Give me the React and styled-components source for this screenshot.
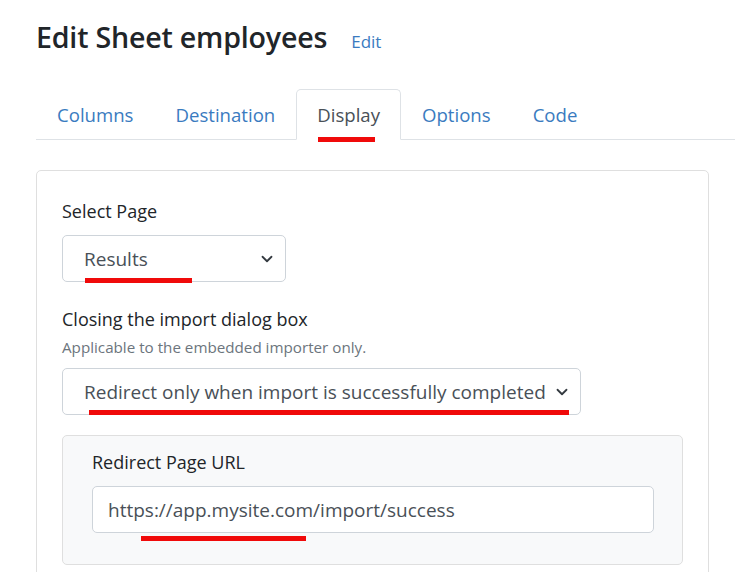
import React from 'react'
import styled, { createGlobalStyle } from 'styled-components'

const GlobalStyle = createGlobalStyle`
    html, body {
        margin: 0;
        padding: 0;
        background: #ffffff;
        overflow: hidden;
    }
    body {
        font-family: "Open Sans", "Noto Sans", sans-serif;
        color: #212529;
    }
`

const Page = styled.div`
    width: 735px;
    height: 572px;
    padding: 19px 0 0 36px;
    box-sizing: border-box;
    overflow: hidden;
`

const TitleRow = styled.div`
    display: flex;
    align-items: baseline;
    gap: 24px;
`

const Title = styled.h3`
    margin: 0;
    font-size: 28.6px;
    font-weight: 600;
    line-height: 1.25;
    color: #212529;
    letter-spacing: -0.2px;
`

const EditLink = styled.a`
    font-size: 17px;
    color: #3a7bbf;
    text-decoration: none;
`

const Tabs = styled.ul`
    display: flex;
    list-style: none;
    margin: 34px 0 0;
    padding: 0;
    border-bottom: 1px solid #dee2e6;
`

const Tab = styled.li`
    position: relative;
    margin-bottom: -1px;
    padding: 10px 20px;
    font-size: 18.6px;
    line-height: 29px;
    color: ${p => (p.$active ? '#495057' : '#3a7bbf')};
    border: 1px solid ${p => (p.$active ? '#dee2e6' : 'transparent')};
    border-bottom-color: ${p => (p.$active ? '#ffffff' : 'transparent')};
    border-radius: 5px 5px 0 0;
    background: ${p => (p.$active ? '#ffffff' : 'transparent')};
`

const Mark = styled.span`
    position: absolute;
    left: ${p => p.$left}px;
    top: ${p => p.$top}px;
    width: ${p => p.$width}px;
    height: 5px;
    background: #f00a0a;
    pointer-events: none;
`

const Card = styled.div`
    margin: 30px 26px 0 0;
    padding: 26px 25px 40px;
    border: 1px solid #dfdfdf;
    border-radius: 5px;
`

const Group = styled.div`
    margin-bottom: ${p => p.$gap || 0}px;
`

const Label = styled.div`
    font-size: 18px;
    line-height: 28px;
    color: #212529;
`

const Help = styled.div`
    margin-top: 3px;
    font-size: 15.2px;
    line-height: 22px;
    color: #6c757d;
`

const SelectBox = styled.div`
    position: relative;
    display: flex;
    align-items: center;
    justify-content: space-between;
    box-sizing: border-box;
    width: ${p => p.$width}px;
    height: 47px;
    margin-top: ${p => p.$top || 0}px;
    padding: 2px 12px 0 21px;
    border: 1px solid #ced4da;
    border-radius: 5px;
    font-size: 19px;
    color: #495057;
    background: #ffffff;
`

const Chevron = () => (
    <svg width="12" height="12" viewBox="0 0 16 16" fill="none">
        <path d="M2 5l6 6 6-6" stroke="#343a40" strokeWidth="2.4" strokeLinecap="round" strokeLinejoin="round" />
    </svg>
)

const Well = styled.div`
    margin-top: 20px;
    padding: 12px 28px 31px 29px;
    background: #f8f9fa;
    border: 1px solid #dfdfdf;
    border-radius: 5px;
`

const Input = styled.div`
    position: relative;
    display: flex;
    align-items: center;
    box-sizing: border-box;
    height: 47px;
    margin-top: 10px;
    padding: 1px 15px 0;
    background: #ffffff;
    border: 1px solid #ced4da;
    border-radius: 5px;
    font-size: 19px;
    color: #495057;
`

const App = () => {
    return (
        <React.Fragment>
            <GlobalStyle />
            <Page>
                <TitleRow>
                    <Title>Edit Sheet employees</Title>
                    <EditLink href="#">Edit</EditLink>
                </TitleRow>

                <Tabs>
                    <Tab>Columns</Tab>
                    <Tab>Destination</Tab>
                    <Tab $active>
                        Display
                        <Mark $left={21} $top={47} $width={57} />
                    </Tab>
                    <Tab>Options</Tab>
                    <Tab>Code</Tab>
                </Tabs>

                <Card>
                    <Group $gap={23}>
                        <Label>Select Page</Label>
                        <SelectBox $width={224} $top={10}>
                            Results
                            <Chevron />
                            <Mark $left={22} $top={42} $width={107} />
                        </SelectBox>
                    </Group>

                    <Group>
                        <Label>Closing the import dialog box</Label>
                        <Help>Applicable to the embedded importer only.</Help>
                        <SelectBox $width={519} $top={10}>
                            Redirect only when import is successfully completed
                            <Chevron />
                            <Mark $left={26} $top={41} $width={480} />
                        </SelectBox>
                    </Group>

                    <Well>
                        <Label>Redirect Page URL</Label>
                        <Input>
                            https://app.mysite.com/import/success
                            <Mark $left={48} $top={49} $width={165} />
                        </Input>
                    </Well>
                </Card>
            </Page>
        </React.Fragment>
    )
}

export default App
